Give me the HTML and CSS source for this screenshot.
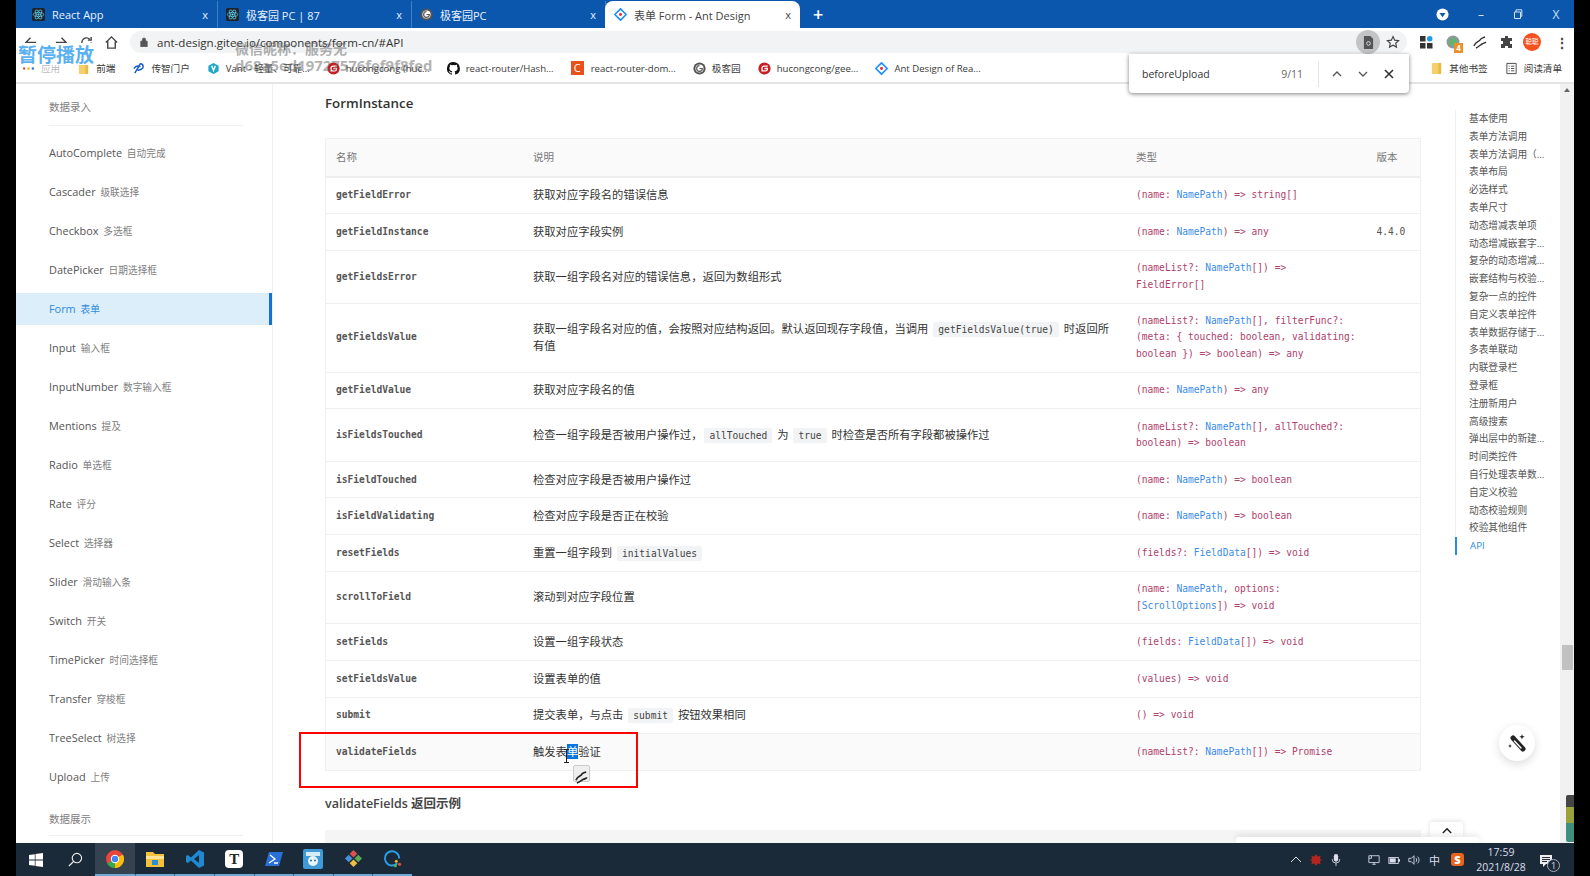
FILE: index.html
```html
<!DOCTYPE html>
<html lang="zh-CN">
<head>
  <meta charset="UTF-8">
  <title>表单 Form - Ant Design</title>
  <link rel="stylesheet" href="styles.css">
</head>
<body>
  <svg class="defs" width="0" height="0">
    <symbol id="react" viewBox="0 0 16 16">
      <rect width="16" height="16" rx="2" fill="#20232a"/>
      <g fill="none" stroke="#61dafb" stroke-width=".8">
        <ellipse cx="8" cy="8" rx="6.4" ry="2.5"/>
        <ellipse cx="8" cy="8" rx="6.4" ry="2.5" transform="rotate(60 8 8)"/>
        <ellipse cx="8" cy="8" rx="6.4" ry="2.5" transform="rotate(120 8 8)"/>
      </g>
      <circle cx="8" cy="8" r="1.3" fill="#61dafb"/>
    </symbol>
    <symbol id="geek" viewBox="0 0 16 16">
      <circle cx="8" cy="8" r="7.5" fill="#555"/>
      <circle cx="8" cy="8" r="5" fill="#fff"/>
      <path d="M8 4.5a3.5 3.5 0 1 0 3.5 3.5H8" fill="none" stroke="#555" stroke-width="1.4"/>
    </symbol>
    <symbol id="gitee" viewBox="0 0 16 16">
      <circle cx="8" cy="8" r="7.5" fill="#c71d23"/>
      <path d="M12 5H7.5A2.5 2.5 0 0 0 5 7.5V11h4.5A2 2 0 0 0 11.500 9V8H8" fill="none" stroke="#fff" stroke-width="1.6"/>
    </symbol>
    <symbol id="antd" viewBox="0 0 16 16">
      <path d="M8 1l7 7-7 7-7-7z" fill="none" stroke="#1890ff" stroke-width="2"/>
      <path d="M8 5.500L10.500 8 8 10.500" fill="none" stroke="#fff" stroke-width="1"/>
      <circle cx="8" cy="8" r="1.800" fill="#f5222d"/>
    </symbol>
    <symbol id="folder" viewBox="0 0 14 14">
      <rect x="2" y="1" width="10" height="12" rx="1" fill="#f4cf6b"/>
      <path d="M9 1h3v12H9z" fill="#e8bb45"/>
    </symbol>
  </svg>

  <div class="screen">
    <div class="edge"></div>
    <div class="desktop">

      <div class="tabstrip">
        <div class="tab">
          <svg class="tab-icon"><use href="#react"/></svg>
          <span class="tab-title">React App</span>
          <span class="tab-close">x</span>
        </div>
        <div class="tab">
          <svg class="tab-icon"><use href="#react"/></svg>
          <span class="tab-title">极客园 PC | 87</span>
          <span class="tab-close">x</span>
        </div>
        <div class="tab">
          <svg class="tab-icon"><use href="#geek"/></svg>
          <span class="tab-title">极客园PC</span>
          <span class="tab-close">x</span>
        </div>
        <div class="tab active">
          <svg class="tab-icon"><use href="#antd"/></svg>
          <span class="tab-title">表单 Form - Ant Design</span>
          <span class="tab-close">x</span>
        </div>
        <span class="tab-new">+</span>
        <div class="window-controls">
          <svg class="profile-dot" viewBox="0 0 14 14"><circle cx="7" cy="7" r="6.500" fill="#fff"/><path d="M3.800 5.500h6.400L7 10z" fill="#0a57ad"/></svg>
          <span class="win-btn">–</span>
          <svg class="win-restore" viewBox="0 0 10 10"><path d="M1.500 3h6v6.500h-6zM3 3V.8h5.800v6.500H7.500" fill="none" stroke="#cfe0f3" stroke-width="1"/></svg>
          <span class="win-btn">X</span>
        </div>
      </div>

      <div class="toolbar">
        <div class="nav-buttons">
          <svg class="nav-icon" viewBox="0 0 16 16"><path d="M14 8H3M8 3L3 8l5 5" /></svg>
          <svg class="nav-icon" viewBox="0 0 16 16"><path d="M2 8h11M8 3l5 5-5 5" /></svg>
          <svg class="nav-icon" viewBox="0 0 16 16"><path d="M13 8a5 5 0 1 1-1.500-3.500M13 2v3.500H9.500" /></svg>
          <svg class="nav-icon" viewBox="0 0 16 16"><path d="M2 8l6-6 6 6M4 7v7h8V7" /></svg>
        </div>
        <div class="address">
          <svg class="lock" viewBox="0 0 10 12"><path d="M1 5h8v7H1zM3 5V3a2 2 0 0 1 4 0v2" fill="#555" stroke="#555"/></svg>
          <span class="url">ant-design.gitee.io/components/form-cn/#API</span>
          <span class="find-btn"><svg viewBox="0 0 12 14" width="11" height="13"><path d="M1 0h7l3 3v11H1z" fill="#555"/><circle cx="6" cy="8" r="2" fill="none" stroke="#ddd"/></svg></span>
          <svg class="star" viewBox="0 0 16 16"><path d="M8 1.800l1.900 4.100 4.500.5-3.300 3 .9 4.400L8 11.600l-4 2.200.9-4.400-3.300-3 4.500-.5z" fill="none" stroke="#444" stroke-width="1.300"/></svg>
        </div>
        <div class="extensions">
          <svg class="ext" viewBox="0 0 14 14"><rect x="1" y="1" width="5.500" height="5.500" fill="#333"/><rect x="8" y="1" width="5.500" height="5.500" rx="2.700" fill="#1e9be8"/><rect x="1" y="8" width="5.500" height="5.500" fill="#333"/><rect x="8" y="8" width="5.500" height="5.500" fill="#333"/></svg>
          <span class="ext-badge-wrap">
            <svg class="ext" viewBox="0 0 14 14"><circle cx="7" cy="7" r="6.500" fill="#8a9a94"/><circle cx="7" cy="7" r="3.500" fill="#5fb56c"/></svg>
            <span class="ext-badge">4</span>
          </span>
          <svg class="ext" viewBox="0 0 14 14"><path d="M1 11c2-5 5-4 6-6s3-2 5-3M3 13c3-1 4-3 6-4s3-1 4-2" fill="none" stroke="#333" stroke-width="1.400"/></svg>
          <svg class="ext" viewBox="0 0 14 14"><path d="M5 1h3v2h4v3h-2v3h2v4H8v-2H5v2H1V9h2V6H1V3h4z" fill="#444"/></svg>
          <span class="avatar">聪聪</span>
          <span class="menu-dots">⋮</span>
        </div>
      </div>

      <div class="bookmarks">
        <div class="bm-list">
          <span class="bm"><svg class="bm-icon" viewBox="0 0 12 12"><g fill="#777"><rect x="1" y="5" width="2" height="2" fill="#e94235"/><rect x="5" y="5" width="2" height="2" fill="#f9ab00"/><rect x="9" y="5" width="2" height="2" fill="#1a73e8"/></g></svg><span class="faded">应用</span></span>
          <span class="bm"><svg class="bm-icon" viewBox="0 0 14 14"><use href="#folder"/></svg>前端</span>
          <span class="bm"><svg class="bm-icon" viewBox="0 0 14 14"><path d="M3 12L9 2c2 0 3 1 3 3s-3 4-6 4M2 7c2-3 5-3 7-2" fill="none" stroke="#1a5fc8" stroke-width="1.600"/></svg>传智门户</span>
          <span class="bm"><svg class="bm-icon" viewBox="0 0 14 14"><path d="M7 1l5.500 3v6L7 13 1.500 10V4z" fill="#1fa8c9"/><path d="M5 4l2 5 2-5" fill="none" stroke="#fff" stroke-width="1.500"/></svg>Vant - 轻量、可靠...</span>
          <span class="bm"><svg class="bm-icon"><use href="#gitee"/></svg>hucongcong (huc...</span>
          <span class="bm"><svg class="bm-icon" viewBox="0 0 16 16"><path fill="#111" d="M8 0a8 8 0 0 0-2.500 15.600c.4.100.5-.2.500-.4v-1.400c-2.200.5-2.700-1-2.700-1-.4-.9-.9-1.200-.9-1.200-.7-.5.100-.5.100-.5.800.100 1.200.8 1.200.8.700 1.200 1.900.9 2.300.7.100-.5.300-.9.500-1.100-1.800-.2-3.600-.9-3.600-4 0-.9.300-1.600.8-2.100-.1-.2-.4-1 .1-2.100 0 0 .7-.2 2.200.8a7.500 7.500 0 0 1 4 0c1.500-1 2.200-.8 2.200-.8.400 1.100.2 1.900.1 2.100.5.600.8 1.300.8 2.100 0 3.100-1.900 3.700-3.700 3.900.3.300.6.800.6 1.500v2.200c0 .2.100.5.600.4A8 8 0 0 0 8 0z"/></svg>react-router/Hash...</span>
          <span class="bm"><span class="bm-c">C</span>react-router-dom...</span>
          <span class="bm"><svg class="bm-icon"><use href="#geek"/></svg>极客园</span>
          <span class="bm"><svg class="bm-icon"><use href="#gitee"/></svg>hucongcong/gee...</span>
          <span class="bm"><svg class="bm-icon"><use href="#antd"/></svg>Ant Design of Rea...</span>
        </div>
        <div class="bm-right">
          <span class="bm"><svg class="bm-icon" viewBox="0 0 14 14"><use href="#folder"/></svg>其他书签</span>
          <span class="bm"><svg class="bm-icon" viewBox="0 0 14 14"><path d="M2 1.500h10v11H2zM4 4.500h1M6.500 4.500H10M4 7h1M6.500 7H10M4 9.500h1M6.500 9.500H10" fill="none" stroke="#444"/></svg>阅读清单</span>
        </div>
      </div>

      <div class="page">
        <aside class="sidebar">
          <div class="menu-group">数据录入</div>
          <ul class="menu">
            <li>AutoComplete <small>自动完成</small></li>
            <li>Cascader <small>级联选择</small></li>
            <li>Checkbox <small>多选框</small></li>
            <li>DatePicker <small>日期选择框</small></li>
            <li class="current">Form <small>表单</small></li>
            <li>Input <small>输入框</small></li>
            <li>InputNumber <small>数字输入框</small></li>
            <li>Mentions <small>提及</small></li>
            <li>Radio <small>单选框</small></li>
            <li>Rate <small>评分</small></li>
            <li>Select <small>选择器</small></li>
            <li>Slider <small>滑动输入条</small></li>
            <li>Switch <small>开关</small></li>
            <li>TimePicker <small>时间选择框</small></li>
            <li>Transfer <small>穿梭框</small></li>
            <li>TreeSelect <small>树选择</small></li>
            <li>Upload <small>上传</small></li>
          </ul>
          <div class="menu-group bottom">数据展示</div>
        </aside>

        <main class="article">
          <h2>FormInstance</h2>
          <table class="api-table">
            <thead>
              <tr><th>名称</th><th>说明</th><th>类型</th><th>版本</th></tr>
            </thead>
            <tbody>
              <tr><td>getFieldError</td><td>获取对应字段名的错误信息</td><td>(name: <a>NamePath</a>) =&gt; string[]</td><td></td></tr>
              <tr><td>getFieldInstance</td><td>获取对应字段实例</td><td>(name: <a>NamePath</a>) =&gt; any</td><td>4.4.0</td></tr>
              <tr><td>getFieldsError</td><td>获取一组字段名对应的错误信息，返回为数组形式</td><td>(nameList?: <a>NamePath</a>[]) =&gt; FieldError[]</td><td></td></tr>
              <tr><td>getFieldsValue</td><td>获取一组字段名对应的值，会按照对应结构返回。默认返回现存字段值，当调用 <code>getFieldsValue(true)</code> 时返回所有值</td><td>(nameList?: <a>NamePath</a>[], filterFunc?: (meta: { touched: boolean, validating: boolean }) =&gt; boolean) =&gt; any</td><td></td></tr>
              <tr><td>getFieldValue</td><td>获取对应字段名的值</td><td>(name: <a>NamePath</a>) =&gt; any</td><td></td></tr>
              <tr><td>isFieldsTouched</td><td>检查一组字段是否被用户操作过，<code>allTouched</code> 为 <code>true</code> 时检查是否所有字段都被操作过</td><td>(nameList?: <a>NamePath</a>[], allTouched?: boolean) =&gt; boolean</td><td></td></tr>
              <tr><td>isFieldTouched</td><td>检查对应字段是否被用户操作过</td><td>(name: <a>NamePath</a>) =&gt; boolean</td><td></td></tr>
              <tr><td>isFieldValidating</td><td>检查对应字段是否正在校验</td><td>(name: <a>NamePath</a>) =&gt; boolean</td><td></td></tr>
              <tr><td>resetFields</td><td>重置一组字段到 <code>initialValues</code></td><td>(fields?: <a>FieldData</a>[]) =&gt; void</td><td></td></tr>
              <tr><td>scrollToField</td><td>滚动到对应字段位置</td><td>(name: <a>NamePath</a>, options: [<a>ScrollOptions</a>]) =&gt; void</td><td></td></tr>
              <tr><td>setFields</td><td>设置一组字段状态</td><td>(fields: <a>FieldData</a>[]) =&gt; void</td><td></td></tr>
              <tr><td>setFieldsValue</td><td>设置表单的值</td><td>(values) =&gt; void</td><td></td></tr>
              <tr><td>submit</td><td>提交表单，与点击 <code>submit</code> 按钮效果相同</td><td>() =&gt; void</td><td></td></tr>
              <tr class="hover"><td>validateFields</td><td>触发表<span class="selected">单</span>验证</td><td>(nameList?: <a>NamePath</a>[]) =&gt; Promise</td><td></td></tr>
            </tbody>
          </table>
          <h3>validateFields 返回示例</h3>
          <div class="code-block"></div>
        </main>

        <nav class="anchors">
          <a>基本使用</a>
          <a>表单方法调用</a>
          <a>表单方法调用（Class component）</a>
          <a>表单布局</a>
          <a>必选样式</a>
          <a>表单尺寸</a>
          <a>动态增减表单项</a>
          <a>动态增减嵌套字段</a>
          <a>复杂的动态增减表单项</a>
          <a>嵌套结构与校验规则</a>
          <a>复杂一点的控件</a>
          <a>自定义表单控件</a>
          <a>表单数据存储于上层组件</a>
          <a>多表单联动</a>
          <a>内联登录栏</a>
          <a>登录框</a>
          <a>注册新用户</a>
          <a>高级搜索</a>
          <a>弹出层中的新建表单</a>
          <a>时间类控件</a>
          <a>自行处理表单数据</a>
          <a>自定义校验</a>
          <a>动态校验规则</a>
          <a>校验其他组件</a>
          <a class="current">API</a>
        </nav>

        <div class="scrollbar">
          <span class="scroll-up"></span>
          <span class="scroll-thumb"></span>
        </div>
      </div>

      <div class="taskbar">
        <div class="task-left">
          <span class="task-btn plain"><svg viewBox="0 0 14 14" width="14" height="14"><path d="M0 2l5.800-.8v5.400H0zM6.500 1.100L14 0v6.600H6.500zM0 7.400h5.800v5.400L0 12zM6.500 7.400H14V14l-7.500-1.100z" fill="#fff"/></svg></span>
          <span class="task-btn plain"><svg viewBox="0 0 16 16" width="15" height="15"><circle cx="9.500" cy="6.500" r="5" fill="none" stroke="#eee" stroke-width="1.200"/><path d="M6 10l-5 5" stroke="#eee" stroke-width="1.400"/></svg></span>
          <span class="task-btn open active"><svg viewBox="0 0 18 18" width="18" height="18"><circle cx="9" cy="9" r="9" fill="#e8453c"/><path d="M9 9L1.200 13.500A9 9 0 0 0 9 18z" fill="#34a853"/><path d="M9 9l7.800-4.500A9 9 0 0 1 9 18z" fill="#fbbc05"/><circle cx="9" cy="9" r="4.200" fill="#fff"/><circle cx="9" cy="9" r="3.200" fill="#4285f4"/></svg></span>
          <span class="task-btn open"><svg viewBox="0 0 18 16" width="18" height="16"><path d="M0 1h7l2 2h9v13H0z" fill="#f3c13a"/><path d="M0 5h18v3H0z" fill="#fbe29a"/><rect x="6" y="9" width="6" height="5" fill="#2a8fd8"/></svg></span>
          <span class="task-btn open"><svg viewBox="0 0 18 18" width="18" height="18"><path d="M13 0l5 2.500v13L13 18 5 10.500 1.800 13 0 12V6l1.800-1L5 7.500z" fill="#1f8ad2"/><path d="M13 5L8 9l5 4z" fill="#1c2b3a"/></svg></span>
          <span class="task-btn open"><span class="typora">T</span></span>
          <span class="task-btn open"><svg viewBox="0 0 18 16" width="18" height="16"><path d="M4 1h14l-4 14H0z" fill="#2a6fd6"/><path d="M5 4l5 4-6 4M9 12h4" fill="none" stroke="#fff" stroke-width="1.300"/></svg></span>
          <span class="task-btn open"><svg viewBox="0 0 20 20" width="20" height="20"><rect width="20" height="20" rx="2" fill="#3f9bd8"/><rect x="3" y="3" width="14" height="4" fill="#d5ecf8"/><circle cx="10" cy="12" r="5" fill="#eaf5fb"/><circle cx="8" cy="11.500" r="1" fill="#2a6fa8"/><circle cx="12" cy="11.500" r="1" fill="#2a6fa8"/></svg></span>
          <span class="task-btn open"><svg viewBox="0 0 20 20" width="19" height="19"><path d="M10 1l4 4-4 4-4-4z" fill="#d9534f"/><path d="M5 6l4 4-4 4-4-4z" fill="#4a90d9"/><path d="M15 6l4 4-4 4-4-4z" fill="#5aa855"/><path d="M10 11l4 4-4 4-4-4z" fill="#f0c040"/></svg></span>
          <span class="task-btn open"><svg viewBox="0 0 20 20" width="19" height="19"><path d="M15 15a7.500 7.500 0 1 1 2-5" fill="none" stroke="#2a9fe8" stroke-width="2"/><circle cx="14" cy="13" r="1.600" fill="#f0b030"/><circle cx="17.500" cy="16" r="1.600" fill="#e8503c"/><circle cx="13" cy="17.500" r="1.600" fill="#5ab05a"/></svg></span>
        </div>
        <div class="tray">
          <svg class="tray-icon" viewBox="0 0 12 12"><path d="M1 8l5-5 5 5" fill="none" stroke="#ddd"/></svg>
          <svg class="tray-icon" viewBox="0 0 12 12"><path d="M6 0l1.500 2.500L10.500 2l-.5 3L12 6l-2 1 .5 3-3-.5L6 12 4.500 9.500 1.500 10l.5-3-2-1 2-1-.5-3 3 .5z" fill="#b3261e"/></svg>
          <svg class="tray-icon" viewBox="0 0 12 14"><rect x="3.500" y="0" width="5" height="9" rx="2.500" fill="#dde"/><path d="M1.500 6a4.500 4.500 0 0 0 9 0M6 10.500V14" fill="none" stroke="#dde"/></svg>
          <span class="tray-space"></span>
          <svg class="tray-icon" viewBox="0 0 14 12"><path d="M1 1h12v8H1zM5 11h4M7 9v2M1 4h3V1" fill="none" stroke="#dde"/></svg>
          <svg class="tray-icon" viewBox="0 0 14 10"><rect x="1" y="2" width="11" height="7" fill="none" stroke="#dde"/><rect x="2" y="3" width="7" height="5" fill="#dde"/><rect x="12" y="4" width="2" height="3" fill="#dde"/></svg>
          <svg class="tray-icon" viewBox="0 0 14 12"><path d="M1 4h3l3-3v10L4 8H1zM9 3.500c1.500 1 1.500 4 0 5M11 2c2.500 2 2.500 6 0 8" fill="none" stroke="#dde"/></svg>
          <span class="tray-ime">中</span>
          <span class="tray-sogou">S</span>
          <div class="clock"><span>17:59</span><span>2021/8/28</span></div>
          <span class="notify">
            <svg viewBox="0 0 14 14" width="14" height="14"><path d="M1 1h12v9H7l-3 3v-3H1z" fill="#eee"/><path d="M3 3.500h8M3 5.500h8M3 7.500h5" stroke="#1c2b3a"/></svg>
            <span class="notify-count">1</span>
          </span>
        </div>
      </div>
    </div>
    <div class="edge"></div>
  </div>

  <!-- things lying over the recording -->
  <div class="paused">暂停播放</div>
  <div class="watermark">
    <span class="wm-line1">微信昵称：服务无</span>
    <span class="wm-line2">d68a5ed19727576fef9f8fed</span>
  </div>
  <div class="find-bar">
    <span class="find-text">beforeUpload</span>
    <span class="find-count">9/11</span>
    <span class="find-sep"></span>
    <svg class="find-icon" viewBox="0 0 12 12"><path d="M2 8l4-4 4 4"/></svg>
    <svg class="find-icon" viewBox="0 0 12 12"><path d="M2 4l4 4 4-4"/></svg>
    <svg class="find-icon close" viewBox="0 0 12 12"><path d="M2 2l8 8M10 2l-8 8"/></svg>
  </div>
  <div class="red-box"></div>
  <svg class="text-cursor" viewBox="0 0 7 14"><path d="M1 .5h5M3.500.5v13M1 13.500h5" fill="none" stroke="#222"/></svg>
  <div class="mini-tool"><svg viewBox="0 0 14 14"><path d="M1 10c2-5 5-4 6-6s3-2 5-3M2 13c3-1 5-3 7-4s3-1 4-2" fill="none" stroke="#222" stroke-width="1.800"/></svg></div>
  <div class="fab">
    <svg viewBox="0 0 20 20" width="20" height="20"><path d="M6 5l10 11" stroke="#222" stroke-width="5" stroke-linecap="round"/><path d="M7.500 8l6.500 7" stroke="#fff" stroke-width="1.400" stroke-linecap="round"/><path d="M15 1l.7 2 2 .7-2 .7-.7 2-.7-2-2-.7 2-.7zM3 11l.6 1.400 1.400.6-1.400.6L3 15l-.6-1.400L1 13l1.400-.6z" fill="#222"/></svg>
  </div>
  <div class="back-top"><svg viewBox="0 0 12 8" width="10" height="7"><path d="M1 7l5-5 5 5" fill="none" stroke="#222" stroke-width="1.800"/></svg></div>
  <div class="bottom-tool"></div>
  <div class="audio-meter"></div>
</body>
</html>
```

FILE: styles.css
```css
* {
  margin: 0;
  padding: 0;
  box-sizing: border-box;
}

:root {
  --chrome-blue: #0a57ad;
  --link: #3c8ce7;
  --type: #b0416c;
  --text: #444;
  --muted: #808080;
  --line: #f0f0f0;
  --taskbar: #1b2a38;
}

html, body {
  width: 1590px;
  height: 876px;
  overflow: hidden;
}

body {
  position: relative;
  background: #000;
  font-family: "Open Sans", "Noto Sans CJK SC", sans-serif;
  color: var(--text);
}

.defs {
  position: absolute;
}

.screen {
  display: flex;
  height: 100%;
}

.edge {
  width: 16px;
  background: #000;
  flex: none;
}

.desktop {
  flex: 1;
  min-width: 0;
  display: flex;
  flex-direction: column;
  background: #fff;
}

/* Tabs */
.tabstrip {
  height: 28px;
  flex: none;
  display: flex;
  align-items: flex-end;
  padding-left: 8px;
  background: var(--chrome-blue);
  color: #e8f0fa;
}

.tab {
  width: 194px;
  height: 27px;
  display: flex;
  align-items: center;
  padding: 0 9px 0 8px;
  border-right: 1px solid #3f7fc4;
  font-size: 11px;
}

.tab.active {
  width: 195px;
  margin-left: -1px;
  padding-left: 9px;
  border: 0;
  border-radius: 8px 8px 0 0;
  background: #fff;
  color: #444;
}

.tab-icon {
  width: 13px;
  height: 13px;
  flex: none;
  margin-right: 7px;
}

.tab-title {
  flex: 1;
  white-space: nowrap;
}

.tab-close {
  font-size: 11px;
}

.tab-new {
  margin: 0 0 4px 13px;
  color: #fff;
  font-size: 18px;
  font-weight: 600;
  line-height: 20px;
}

.window-controls {
  margin-left: auto;
  align-self: stretch;
  display: flex;
  align-items: center;
  padding-right: 12px;
  color: #cfe0f3;
  font-size: 12px;
}

.profile-dot {
  width: 13px;
  height: 13px;
  margin-right: 26px;
}

.win-btn {
  width: 12px;
  text-align: center;
}

.win-restore {
  width: 10px;
  height: 10px;
  margin: 0 27px 0 26px;
}

/* Address bar */
.toolbar {
  height: 28px;
  flex: none;
  display: flex;
  align-items: center;
  background: #fff;
}

.nav-buttons {
  width: 114px;
  flex: none;
  display: flex;
  align-items: center;
  gap: 10px;
  padding-left: 7px;
}

.nav-icon {
  width: 15px;
  height: 15px;
  fill: none;
  stroke: #444;
  stroke-width: 1.500;
}

.nav-icon:first-child {
  margin-right: 6px;
}

.address {
  width: 1277px;
  height: 22px;
  flex: none;
  display: flex;
  align-items: center;
  padding: 0 5px 0 10px;
  border-radius: 11px;
  background: #f1f3f4;
}

.lock {
  width: 8px;
  height: 10px;
  margin-right: 9px;
}

.url {
  flex: 1;
  font-size: 11.550px;
  color: #333;
}

.find-btn {
  width: 24px;
  height: 24px;
  display: flex;
  align-items: center;
  justify-content: center;
  border-radius: 50%;
  background: #c2c4c6;
}

.star {
  width: 14px;
  height: 14px;
  margin: 0 2px 0 6px;
}

.extensions {
  flex: 1;
  display: flex;
  align-items: center;
  gap: 13px;
  padding-left: 12px;
}

.ext {
  width: 14px;
  height: 14px;
  display: block;
}

.ext-badge-wrap {
  position: relative;
}

.ext-badge {
  position: absolute;
  right: -3px;
  bottom: -4px;
  width: 9px;
  height: 10px;
  background: #e8912d;
  color: #fff;
  font-size: 8px;
  font-weight: 700;
  line-height: 10px;
  text-align: center;
}

.avatar {
  width: 18px;
  height: 18px;
  margin-left: -4px;
  border-radius: 50%;
  background: #f4511e;
  color: #fff;
  font-size: 6.500px;
  line-height: 18px;
  text-align: center;
}

.menu-dots {
  font-size: 14px;
  font-weight: 700;
  color: #444;
  margin-left: 1px;
}

/* Bookmarks */
.bookmarks {
  height: 28px;
  flex: none;
  display: flex;
  align-items: center;
  justify-content: space-between;
  padding: 0 12px 2px 6px;
  border-bottom: 2px solid #e4e4e4;
  background: #fff;
  font-size: 9.600px;
  color: #3a3a3a;
  white-space: nowrap;
}

.bm-list, .bm-right, .bm {
  display: flex;
  align-items: center;
}

.bm-list {
  gap: 17px;
}

.bm-right {
  gap: 17px;
  padding-left: 8px;
}

.bm-icon {
  width: 13px;
  height: 13px;
  flex: none;
  margin-right: 6px;
}

.bm-c {
  width: 13px;
  height: 14px;
  margin-right: 7px;
  background: #e8501c;
  color: #fff;
  font-size: 11px;
  line-height: 14px;
  text-align: center;
}

.faded {
  opacity: 0.35;
}

/* Page */
.page {
  flex: 1;
  min-height: 0;
  display: flex;
  overflow: hidden;
  background: #fff;
}

.sidebar {
  width: 257px;
  flex: none;
  border-right: 1px solid #f0f0f0;
}

.menu-group {
  height: 42px;
  margin: 0 29px 0 33px;
  padding-top: 15px;
  border-bottom: 1px solid var(--line);
  color: var(--muted);
  font-size: 10.500px;
}

.menu-group.bottom {
  height: 37px;
  margin-top: 6px;
  padding-top: 12px;
}

.menu {
  display: flex;
  flex-direction: column;
  gap: 7px;
  margin-top: 11px;
  list-style: none;
}

.menu li {
  height: 32px;
  padding-left: 33px;
  font-size: 10.900px;
  line-height: 32px;
  color: #555;
}

.menu small {
  margin-left: 2px;
  color: #808080;
  font-size: 9.700px;
}

.menu .current {
  border-right: 3px solid #1273d4;
  background: #dceefa;
  color: #2d8ae0;
}

.menu .current small {
  color: #2d8ae0;
}

.article {
  width: 1148px;
  flex: none;
  padding: 7px 0 0 52px;
}

.article h2 {
  font-size: 13.300px;
  font-weight: 600;
  line-height: 24px;
  color: #333;
  margin-bottom: 23px;
}

.article h3 {
  margin-top: 22px;
  font-size: 12.500px;
  font-weight: 600;
  line-height: 22px;
  color: #444;
}

/* rows are grids so they keep the fractional height of the scaled recording */
.api-table {
  display: block;
  width: 1096px;
  border: 1px solid var(--line);
  border-bottom: 0;
}

.api-table thead,
.api-table tbody {
  display: block;
}

.api-table tr {
  display: grid;
  grid-template-columns: 197px 603px 240.500px 53.500px;
  align-items: center;
  border-bottom: 1px solid var(--line);
}

.api-table thead tr {
  height: 38.600px;
  padding-bottom: 2px;
  border-bottom: 2px solid #efefef;
  background: #fafafa;
}

.api-table th {
  padding: 0 10px;
  color: #777;
  font-size: 10.500px;
  font-weight: 400;
  text-align: left;
}

.api-table td {
  min-width: 0;
  padding: 9.700px 10px;
  font-size: 11.300px;
  line-height: 16.200px;
  color: #333;
}

.api-table td:first-child,
.api-table td:nth-child(3),
.api-table td:nth-child(4),
.api-table code {
  font-family: "DejaVu Sans Mono", monospace;
  font-size: 9.600px;
}

.api-table td:first-child {
  font-weight: 700;
  color: #555;
}

.api-table td:nth-child(3) {
  color: var(--type);
}

.api-table td:nth-child(4) {
  color: #555;
}

.api-table a {
  color: var(--link);
}

.api-table code {
  margin: 0 2px;
  padding: 2px 5px;
  border-radius: 2px;
  background: #f2f3f4;
  color: #444;
  line-height: 1;
}

.api-table .hover {
  background: #fafafa;
}

.selected {
  background: #0a74e0;
  color: #fff;
}

.code-block {
  width: 1096px;
  height: 40px;
  margin-top: 15px;
  background: #f5f5f5;
}

.anchors {
  width: 105px;
  flex: none;
  display: flex;
  flex-direction: column;
  align-self: flex-start;
  margin: 26px 0 0 34px;
  border-left: 1px solid #f0f0f0;
}

.anchors a {
  height: 17.800px;
  width: 89px;
  padding-left: 13px;
  overflow: hidden;
  color: #555;
  font-size: 9.700px;
  line-height: 17.800px;
  white-space: nowrap;
  text-overflow: ellipsis;
}

.anchors .current {
  margin-left: -1px;
  border-left: 2px solid #2d8ae0;
  color: #2d8ae0;
}

.scrollbar {
  width: 14px;
  margin-left: auto;
  flex: none;
  display: flex;
  flex-direction: column;
  align-items: center;
  background: #f1f1f1;
}

.scroll-up {
  margin-top: 4px;
  border: 3px solid transparent;
  border-top: 0;
  border-bottom: 4px solid #666;
}

.scroll-thumb {
  width: 11px;
  height: 25px;
  margin-top: 553px;
  background: #c1c1c1;
}

/* Taskbar */
.taskbar {
  height: 33px;
  flex: none;
  display: flex;
  justify-content: space-between;
  background: var(--taskbar);
  color: #dde;
}

.task-left {
  display: flex;
}

.task-btn {
  width: 39.600px;
  display: flex;
  align-items: center;
  justify-content: center;
}

.task-btn.open {
  border-bottom: 2px solid #6fa9d6;
}

.task-btn.active {
  background: #34434f;
}

.task-btn.open + .task-btn.open {
  border-left: 1px solid var(--taskbar);
}

.typora {
  width: 18px;
  height: 18px;
  border-radius: 4px;
  background: #fff;
  color: #222;
  font-family: "Liberation Serif", serif;
  font-size: 15px;
  font-weight: 700;
  line-height: 18px;
  text-align: center;
}

.tray {
  display: flex;
  align-items: center;
  gap: 8px;
  padding-right: 17px;
}

.tray-icon {
  width: 12px;
  height: 12px;
}

.tray-space {
  width: 10px;
}

.tray-ime {
  margin-left: 1px;
  font-size: 11px;
}

.tray-sogou {
  width: 13px;
  height: 13px;
  margin-left: 3px;
  border-radius: 3px;
  background: #e8641e;
  color: #fff;
  font-size: 11px;
  font-weight: 800;
  line-height: 13px;
  text-align: center;
}

.clock {
  display: flex;
  flex-direction: column;
  align-items: center;
  width: 50px;
  margin-left: 4px;
  font-size: 10.500px;
  line-height: 15px;
}

.notify {
  position: relative;
  margin-left: 5px;
  width: 18px;
  height: 18px;
}

.notify-count {
  position: absolute;
  right: -3px;
  bottom: -3px;
  width: 13px;
  height: 13px;
  border: 1px solid #aab;
  border-radius: 50%;
  background: var(--taskbar);
  font-size: 9px;
  line-height: 11px;
  text-align: center;
}

/* Overlays */
.paused {
  position: absolute;
  left: 16px;
  top: 43px;
  padding: 0 2px;
  background: #fff;
  color: #5ab0f0;
  font-family: "Noto Sans CJK SC", sans-serif;
  font-size: 19px;
  font-weight: 700;
  line-height: 22px;
}

.watermark {
  position: absolute;
  left: 235px;
  top: 40px;
  display: flex;
  flex-direction: column;
  color: rgba(100, 100, 100, 0.5);
  font-weight: 700;
  pointer-events: none;
}

.wm-line1 {
  font-size: 14px;
  line-height: 17px;
}

.wm-line2 {
  margin-top: -1px;
  font-size: 14.900px;
  line-height: 18px;
}

.find-bar {
  position: absolute;
  left: 1129px;
  top: 54px;
  width: 280px;
  height: 39px;
  display: flex;
  align-items: center;
  padding: 0 14px 0 13px;
  border-radius: 0 0 4px 4px;
  background: #fff;
  box-shadow: 0 1px 4px rgba(0, 0, 0, 0.5);
  font-size: 10.500px;
  color: #333;
}

.find-text {
  flex: 1;
}

.find-count {
  color: #666;
}

.find-sep {
  width: 1px;
  height: 26px;
  margin: 0 12px 0 15px;
  background: #e3e3e3;
}

.find-icon {
  width: 12px;
  height: 12px;
  margin-right: 14px;
  fill: none;
  stroke: #555;
  stroke-width: 1.300;
}

.find-icon.close {
  margin-right: 0;
  stroke: #333;
  stroke-width: 1.600;
}

.red-box {
  position: absolute;
  left: 299px;
  top: 732px;
  width: 339px;
  height: 56px;
  border: 2px solid #f00;
  pointer-events: none;
}

.text-cursor {
  position: absolute;
  left: 563px;
  top: 749px;
  width: 7px;
  height: 14px;
}

.mini-tool {
  position: absolute;
  left: 573px;
  top: 765px;
  width: 17px;
  height: 17px;
  padding: 1px;
  border: 1px solid #ccc;
  border-radius: 2px;
  background: #eee;
}

.fab {
  position: absolute;
  left: 1499px;
  top: 725px;
  width: 36px;
  height: 36px;
  display: flex;
  align-items: center;
  justify-content: center;
  border-radius: 50%;
  background: #fff;
  box-shadow: 0 3px 10px rgba(0, 0, 0, 0.14);
}

.back-top {
  position: absolute;
  left: 1430px;
  top: 822px;
  width: 33px;
  height: 16px;
  display: flex;
  align-items: center;
  justify-content: center;
  border-radius: 3px 3px 0 0;
  background: #fff;
  box-shadow: 0 -1px 5px rgba(0, 0, 0, 0.12);
}

.bottom-tool {
  position: absolute;
  left: 1236px;
  top: 837px;
  width: 243px;
  height: 6px;
  border-radius: 3px 3px 0 0;
  background: #fff;
  box-shadow: 0 -2px 6px rgba(0, 0, 0, 0.1);
}

.audio-meter {
  position: absolute;
  left: 1566px;
  top: 795px;
  width: 8px;
  height: 47px;
  border-radius: 2px 0 0 2px;
  background: linear-gradient(#454545 0 25%, #9aa23a 25% 60%, #3f8f80 60%);
}
```
